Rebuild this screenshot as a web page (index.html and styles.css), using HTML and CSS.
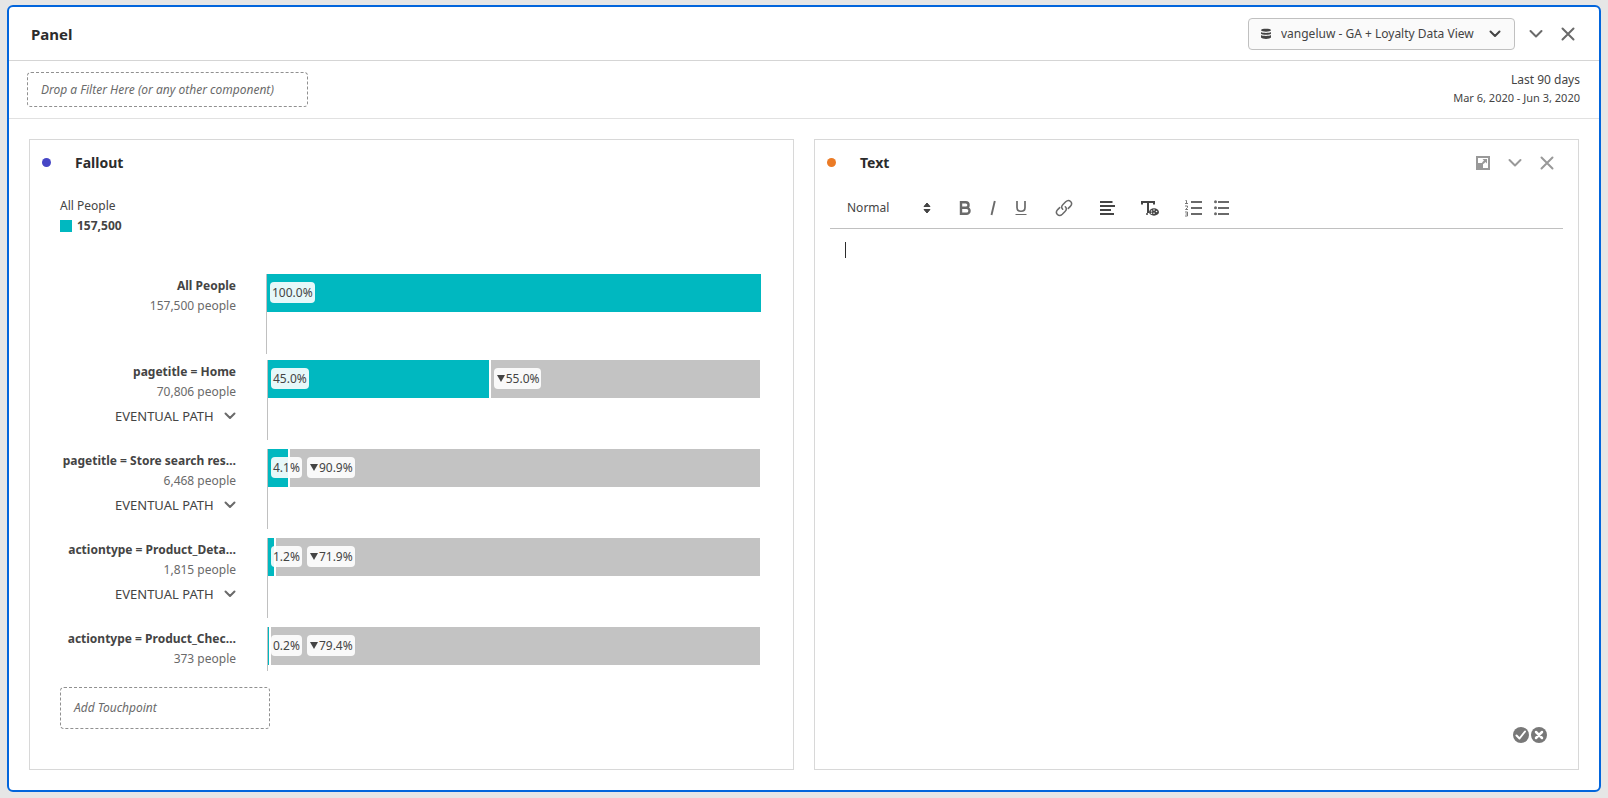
FILE: index.html
```html
<!DOCTYPE html>
<html lang="en">
<head>
<meta charset="utf-8">
<title>Panel</title>
<link rel="stylesheet" href="styles.css">
</head>
<body>
<main class="panel">
  <header class="panel-header">
    <h1 class="panel-title">Panel</h1>
    <label class="data-view">
      <svg class="icon" width="12" height="12" viewBox="0 0 12 12" aria-hidden="true"><path d="M1 2.2C1 .3 11 .3 11 2.2S1 4.100 1 2.200ZM1 4c1.500 1.200 8.500 1.200 10 0v1.700c-1 1.500-9 1.500-10 0ZM1 7c1.500 1.200 8.500 1.200 10 0v2.500c-1 1.900-9 1.900-10 0Z" fill="currentColor"/></svg>
      <select class="data-view-select" aria-label="Data view"><option>vangeluw - GA + Loyalty Data View</option></select>
      <svg class="icon" width="12" height="8" viewBox="0 0 12 8" aria-hidden="true"><path d="M1.500 1.500 6 6l4.500-4.500" class="stroke"/></svg>
    </label>
    <button class="icon-button" aria-label="Collapse panel"><svg width="14" height="10" viewBox="0 0 14 10"><path d="M1.500 2 7 7.500 12.500 2" class="stroke"/></svg></button>
    <button class="icon-button" aria-label="Close panel"><svg width="14" height="14" viewBox="0 0 14 14"><path d="M1.500 1.500l11 11m0-11-11 11" class="stroke"/></svg></button>
  </header>

  <section class="filter-row">
    <div class="drop-zone filter-zone">Drop a Filter Here (or any other component)</div>
    <div class="date-range">
      <div class="date-name">Last 90 days</div>
      <div class="date-dates">Mar 6, 2020 - Jun 3, 2020</div>
    </div>
  </section>

  <div class="cards">
    <section class="card">
      <header class="card-header">
        <span class="dot dot-blue"></span>
        <h2 class="card-title">Fallout</h2>
      </header>
      <div class="fallout">
        <div class="legend">
          <div class="legend-name">All People</div>
          <div class="legend-value"><span class="swatch"></span>157,500</div>
        </div>
        <div class="step step-first">
          <div class="step-label"><div class="step-name">All People</div><div class="step-count">157,500 people</div></div>
          <div class="axis"><div class="bar" style="--fill:100%"><div class="fill"></div><div class="pills"><div class="pill-cell"><span class="pill">100.0%</span></div></div></div></div>
        </div>
        <div class="step">
          <div class="step-label"><div class="step-name">pagetitle = Home</div><div class="step-count">70,806 people</div>
            <label class="path"><select class="path-select" aria-label="Path type"><option>EVENTUAL PATH</option></select><svg width="12" height="8" viewBox="0 0 12 8"><path d="M1.500 1.500 6 6l4.500-4.500" class="stroke"/></svg></label></div>
          <div class="axis"><div class="bar" style="--fill:45%"><div class="fill"></div><div class="rest"></div><div class="pills"><div class="pill-cell"><span class="pill">45.0%</span></div><span class="pill pill-drop"><i class="down"></i>55.0%</span></div></div></div>
        </div>
        <div class="step">
          <div class="step-label"><div class="step-name">pagetitle = Store search res…</div><div class="step-count">6,468 people</div>
            <label class="path"><select class="path-select" aria-label="Path type"><option>EVENTUAL PATH</option></select><svg width="12" height="8" viewBox="0 0 12 8"><path d="M1.500 1.500 6 6l4.500-4.500" class="stroke"/></svg></label></div>
          <div class="axis"><div class="bar" style="--fill:4.1%"><div class="fill"></div><div class="rest"></div><div class="pills"><div class="pill-cell"><span class="pill">4.1%</span></div><span class="pill pill-drop"><i class="down"></i>90.9%</span></div></div></div>
        </div>
        <div class="step">
          <div class="step-label"><div class="step-name">actiontype = Product_Deta…</div><div class="step-count">1,815 people</div>
            <label class="path"><select class="path-select" aria-label="Path type"><option>EVENTUAL PATH</option></select><svg width="12" height="8" viewBox="0 0 12 8"><path d="M1.500 1.500 6 6l4.500-4.500" class="stroke"/></svg></label></div>
          <div class="axis"><div class="bar" style="--fill:1.2%"><div class="fill"></div><div class="rest"></div><div class="pills"><div class="pill-cell"><span class="pill">1.2%</span></div><span class="pill pill-drop"><i class="down"></i>71.9%</span></div></div></div>
        </div>
        <div class="step step-last">
          <div class="step-label"><div class="step-name">actiontype = Product_Chec…</div><div class="step-count">373 people</div></div>
          <div class="axis"><div class="bar" style="--fill:0.2%"><div class="fill"></div><div class="rest"></div><div class="pills"><div class="pill-cell"><span class="pill">0.2%</span></div><span class="pill pill-drop"><i class="down"></i>79.4%</span></div></div></div>
        </div>
        <div class="drop-zone touchpoint-zone">Add Touchpoint</div>
      </div>
    </section>

    <section class="card">
      <header class="card-header">
        <span class="dot dot-orange"></span>
        <h2 class="card-title">Text</h2>
        <div class="card-actions">
          <button class="icon-button" aria-label="Expand"><svg width="14" height="14" viewBox="0 0 14 14"><path fill-rule="evenodd" d="M0 0h14v14H0ZM2 2v5h5v5h5V2Z" fill="currentColor"/><path d="M6.500 3H11v4.500L9.500 6 7.500 8 6 6.500l2-2Z" fill="currentColor"/></svg></button>
          <button class="icon-button" aria-label="Collapse"><svg width="14" height="10" viewBox="0 0 14 10"><path d="M1.500 2 7 7.500 12.500 2" class="stroke"/></svg></button>
          <button class="icon-button" aria-label="Close"><svg width="14" height="14" viewBox="0 0 14 14"><path d="M1.500 1.500l11 11m0-11-11 11" class="stroke"/></svg></button>
        </div>
      </header>
      <div class="editor">
        <div class="toolbar">
          <label class="format"><select class="format-select" aria-label="Text style"><option>Normal</option></select><svg width="8" height="12" viewBox="0 0 8 12"><path d="M1 4.500 4 1l3 3.500ZM1 7.500 4 11l3-3.500Z" fill="currentColor" stroke="currentColor" stroke-linejoin="round"/></svg></label>
          <div class="tools">
            <button class="tool" aria-label="Bold"><svg width="18" height="18" viewBox="0 0 18 18"><path d="M5 3.200h4.800a2.700 2.700 0 0 1 0 5.500H5Zm0 5.500h5.500a3 3 0 0 1 0 6.100H5Z" fill="none" stroke="currentColor" stroke-width="2.400"/></svg></button>
            <button class="tool" aria-label="Italic"><svg width="18" height="18" viewBox="0 0 18 18"><path d="M10.800 2 7.500 16" fill="none" stroke="currentColor" stroke-width="1.900"/></svg></button>
            <button class="tool" aria-label="Underline"><svg width="18" height="18" viewBox="0 0 18 18"><path d="M5 2v6.500c0 5 8 5 8 0V2" fill="none" stroke="currentColor" stroke-width="1.700"/><path d="M3.500 15.500h11" stroke="currentColor"/></svg></button>
          </div>
          <button class="tool" aria-label="Link"><svg width="18" height="18" viewBox="0 0 18 18"><g fill="none" stroke="currentColor" stroke-width="1.500" stroke-linecap="round"><path d="M7.700 10.300c-2-2-.8-3.700.3-4.800l2.700-2.700c3.500-3.300 8 1 4.600 4.600l-2 2"/><path d="M10.300 7.700c2 2 .8 3.700-.3 4.800l-2.700 2.700c-3.500 3.300-8-1-4.600-4.600l2-2"/></g></svg></button>
          <button class="tool tool-dark" aria-label="Align"><svg width="18" height="18" viewBox="0 0 18 18"><path d="M2 3h12.500M2 7h15M2 11h11M2 15h14" stroke="currentColor" stroke-width="2"/></svg></button>
          <button class="tool tool-dark" aria-label="Text colour"><svg width="18" height="18" viewBox="0 0 18 18"><path d="M1 5.500V3h12v2.500M7 3v11" fill="none" stroke="currentColor" stroke-width="2"/><path d="M5 15h2" stroke="currentColor" stroke-width="1.500"/><ellipse cx="13" cy="13" rx="5" ry="3.700" fill="currentColor"/><g fill="#fff"><circle cx="10.500" cy="12" r=".8"/><circle cx="13" cy="11" r=".8"/><circle cx="15.500" cy="12.500" r=".8"/><circle cx="10.500" cy="14.300" r=".8"/><circle cx="13" cy="14.300" r=".8"/></g></svg></button>
          <div class="tools">
            <button class="tool" aria-label="Numbered list"><svg width="18" height="18" viewBox="0 0 18 18"><path d="M7 3h11M7 9h11M7 15h11" stroke="currentColor" stroke-width="2"/><path d="M1.500 1.500h1v3m-1.500 0h3M1 7h2.500v1.500L1.500 10.500H4M1 13h2.500v4H1m.5-2h2" fill="none" stroke="currentColor" stroke-width=".9"/></svg></button>
            <button class="tool" aria-label="Bulleted list"><svg width="18" height="18" viewBox="0 0 18 18"><path d="M6 3h11M6 9h11M6 15h11" stroke="currentColor" stroke-width="2"/><g fill="currentColor"><circle cx="3.500" cy="2.700" r="1.500"/><circle cx="3.500" cy="8.700" r="1.500"/><circle cx="3.500" cy="14.700" r="1.500"/></g></svg></button>
          </div>
        </div>
        <div class="writing">
          <span class="caret"></span>
          <textarea class="text-area" aria-label="Text"></textarea>
        </div>
        <div class="confirm">
          <button class="round-button" aria-label="Save"><svg width="16" height="16" viewBox="0 0 16 16"><circle cx="8" cy="8" r="8" fill="currentColor"/><path d="m3.500 8.500 3 3L12 4.500" fill="none" stroke="#fff" stroke-width="2" stroke-linecap="round" stroke-linejoin="round"/></svg></button>
          <button class="round-button" aria-label="Cancel"><svg width="16" height="16" viewBox="0 0 16 16"><circle cx="8" cy="8" r="8" fill="currentColor"/><path d="m5 5 6 6m0-6-6 6" stroke="#fff" stroke-width="2.500" stroke-linecap="round"/></svg></button>
        </div>
      </div>
    </section>
  </div>
</main>
</body>
</html>
```
FILE: styles.css
```css
* { box-sizing: border-box; }

body {
  margin: 0;
  padding: 5px 7px 6px;
  background: #e6e6e6;
  color: #444;
  font: 12px/20px "Noto Sans", "Open Sans", sans-serif;
}

h1, h2 { margin: 0; color: #2c2c2c; font-weight: 700; }
svg { display: block; flex: none; }
.stroke { fill: none; stroke: currentColor; stroke-width: 2; stroke-linecap: round; stroke-linejoin: round; }

button, select, textarea {
  margin: 0;
  padding: 0;
  border: 0;
  background: none;
  color: inherit;
  font: inherit;
}

select { appearance: none; outline: none; cursor: pointer; }

.panel {
  border: 2px solid #0265dc;
  border-radius: 6px;
  background: #fff;
}

.panel-header {
  display: flex;
  align-items: center;
  height: 54px;
  padding: 0 24px 0 22px;
  border-bottom: 1px solid #d5d5d5;
}

.panel-title { flex: 1; font-size: 15px; }

.data-view {
  display: flex;
  align-items: center;
  width: 267px;
  height: 32px;
  margin-right: 14px;
  padding: 0 13px 0 11px;
  border: 1px solid #c0c0c0;
  border-radius: 4px;
  background: #fafafa;
}

.data-view-select { flex: 1; min-width: 0; margin-left: 9px; }

.icon-button {
  display: grid;
  place-items: center;
  width: 14px;
  height: 20px;
  color: #6a6a6a;
}

.icon-button + .icon-button { margin-left: 18px; }

.filter-row {
  display: flex;
  justify-content: space-between;
  height: 58px;
  padding: 11px 19px 0 18px;
  border-bottom: 1px solid #e1e1e1;
}

.drop-zone {
  display: flex;
  align-items: center;
  padding: 0 13px;
  border: 1px dashed #909090;
  border-radius: 4px;
  color: #6a6a6a;
  font-style: italic;
}

.filter-zone { width: 281px; height: 35px; }
.date-range { text-align: right; }
.date-name { line-height: 16px; }
.date-dates { font-size: 11px; line-height: 19px; }

.cards {
  display: grid;
  grid-template-columns: 1fr 1fr;
  gap: 20px;
  padding: 20px;
}

.card {
  display: flex;
  flex-direction: column;
  min-width: 0;
  border: 1px solid #d8d8d8;
}

.card-header {
  display: flex;
  align-items: center;
  height: 45px;
  padding: 0 24px 0 12px;
}

.dot { width: 9px; height: 9px; border-radius: 50%; }
.dot-blue { background: #4646c6; }
.dot-orange { background: #eb7b26; }
.card-title { flex: 1; margin-left: 24px; font-size: 14px; }
.card-actions { display: flex; }
.card-actions .icon-button { height: 22px; color: #999; }

.fallout { padding: 11px 32px 40px 30px; }
.legend { margin-bottom: 38px; }

.legend-value {
  display: flex;
  align-items: center;
  gap: 5px;
  font-weight: 700;
}

.swatch { width: 12px; height: 12px; background: #00b8c0; }

.step {
  display: flex;
  gap: 31px;
  height: 89px;
  padding-right: 1px;
}

.step-first { gap: 30px; height: 86px; padding-right: 0; }
.step-last { height: 60px; }

.step-label { width: 176px; flex: none; padding-top: 2px; text-align: right; }

.step-name { font-weight: 700; white-space: nowrap; }
.step-count { color: #6a6a6a; }

.path {
  display: flex;
  justify-content: flex-end;
  align-items: center;
  gap: 10px;
  margin-top: 4px;
}

.path-select { font-size: 13px; }
.path svg { color: #6a6a6a; }

.axis { flex: 1; height: 80px; border-left: 1px solid #c0c0c0; }
.step-last .axis { height: 44px; }

.bar { position: relative; display: flex; gap: 2px; height: 38px; }
.fill { flex: none; width: var(--fill); background: #00b8c0; }
.rest { flex: 1; background: #c3c3c3; }

.pills {
  position: absolute;
  inset: 8px 3px auto;
  display: flex;
  gap: 5px;
}

.pill-cell { min-width: calc(var(--fill) - 1px); }

.pill {
  display: inline-block;
  height: 21px;
  padding: 0 2px;
  border-radius: 4px;
  background: rgba(255, 255, 255, 0.9);
  line-height: 21px;
}

.pill-drop { display: flex; align-items: center; gap: 1px; padding-left: 3px; }

.down {
  border: 4px solid transparent;
  border-top: 7px solid #444;
  border-bottom: 0;
}

.touchpoint-zone { width: 210px; height: 42px; }

.editor {
  display: flex;
  flex-direction: column;
  flex: 1;
  padding: 0 15px 26px;
}

.toolbar {
  display: flex;
  align-items: center;
  gap: 25px;
  height: 44px;
  padding: 2px 0 0 17px;
  border-bottom: 1px solid #c0c0c0;
}

.format { display: flex; align-items: center; width: 84px; }
.format-select { flex: 1; min-width: 0; }
.tools { display: flex; gap: 10px; }
.tool { color: #6a6a6a; }
.tool-dark { color: #444; }

.writing { display: flex; flex: 1; padding: 13px 15px; }
.caret { width: 1px; height: 16px; background: #2c2c2c; }
.text-area { flex: 1; resize: none; outline: none; }

.confirm { display: flex; justify-content: flex-end; gap: 2px; padding-right: 16px; }
.round-button { color: #787878; }
```
